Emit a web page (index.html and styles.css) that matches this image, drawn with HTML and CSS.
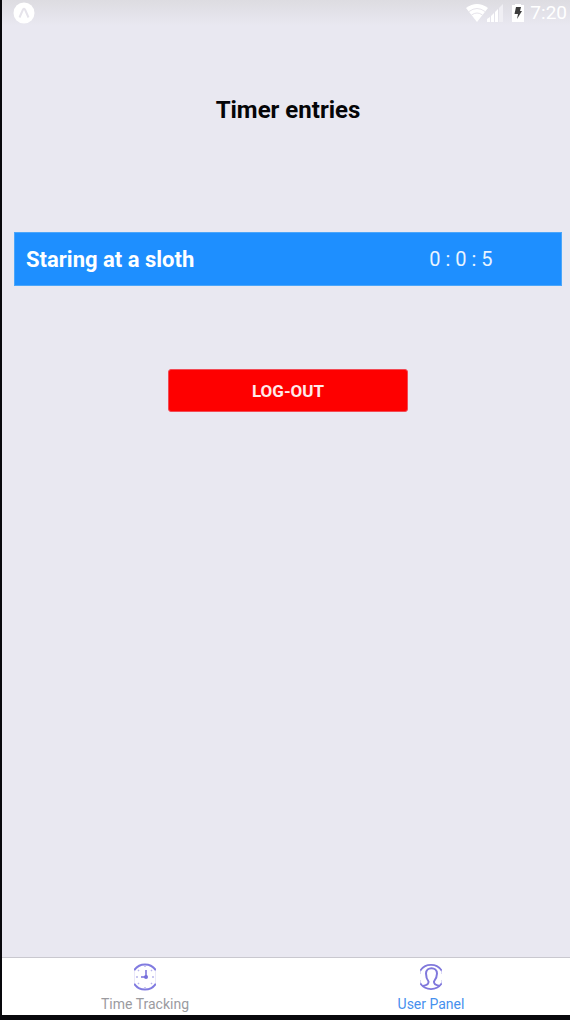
FILE: index.html
```html
<!DOCTYPE html>
<html lang="en">
<head>
<meta charset="utf-8">
<title>Timer entries</title>
<meta name="viewport" content="width=device-width, initial-scale=1">
<link rel="stylesheet" href="styles.css">
</head>
<body>
<div class="screen">
  <header class="status">
    <svg class="status-app" viewBox="0 0 22 22" aria-hidden="true">
      <circle cx="11" cy="11" r="10.5" fill="#fff"/>
      <path d="M6.500 15.500 10 7.500q1-1.500 2 0l3.500 8" fill="none" stroke="#e6e4eb" stroke-width="2"/>
    </svg>
    <div class="status-right">
      <svg class="status-signal" viewBox="0 0 40 20" aria-hidden="true">
        <path d="M0 5Q11-3 22 5L11 19Z" fill="#fff"/>
        <path d="M3 8.500q8-6 16 0M5.500 12q5.500-4 11 0" fill="none" stroke="#e6e4eb" stroke-width="1"/>
        <path d="M21 19v-3l3-2v5ZM25 19v-6l3-3v9ZM29 19V9l3-3v13Z" fill="#fff"/>
        <path d="M33 19V5l4-4v18Z" fill="#f0eff4"/>
      </svg>
      <svg class="status-battery" viewBox="0 0 12 18" aria-hidden="true">
        <path d="M0 1h3V0h6v1h3v17H0Z" fill="#fff"/>
        <path d="M4 3h5L8 7h2l-5 8 1-5H2.500Z" fill="#3c3c3c"/>
      </svg>
      <span class="clock">7:20</span>
    </div>
  </header>
  <main class="content">
    <h1 class="title">Timer entries</h1>
    <ul class="entries">
      <li class="entry">
        <span class="entry-name">Staring at a sloth</span>
        <span class="entry-time">0 : 0 : 5</span>
      </li>
    </ul>
    <button class="logout" type="button">LOG-OUT</button>
  </main>
  <nav class="tabs">
    <a class="tab" href="#tracking">
      <svg class="tab-icon" viewBox="0 0 22 28" aria-hidden="true">
        <path d="M0 7.500A13 13 0 0 1 22 7.500M0 20.500A13 13 0 0 0 22 20.500" fill="none" stroke="#817be0" stroke-width="2"/>
        <path d="M0 7v14M22 7v14" stroke="#d5d2f3" stroke-width="1"/>
        <path d="M12 7v7H7" fill="none" stroke="#7770dc" stroke-width="1.500"/>
        <circle cx="12" cy="14" r="2" fill="#7770dc"/>
        <path d="M11 3v1M11 24v1M2 14h2M18 14h2M4 7l1 1M18 7l-1 1M4 21l1-1M18 21l-1-1" stroke="#b8b5ec" stroke-width="1.500"/>
      </svg>
      <span>Time Tracking</span>
    </a>
    <a class="tab tab-active" href="#user" aria-current="page">
      <svg class="tab-icon" viewBox="0 0 22 28" aria-hidden="true">
        <path d="M0 8A13 13 0 0 1 22 8M0 20A13 13 0 0 0 22 20" fill="none" stroke="#8078dc" stroke-width="1.800"/>
        <path d="M0 7v4M0 17v4M22 7v4M22 17v4" stroke="#b8b5ec" stroke-width="1"/>
        <path d="M3 23Q9 22 8.500 18.500C6.500 16 6 14 6 10.500C6 3.500 17 3.500 17 10.500C17 14 16 16 14 18.500Q13.500 22 20 23" fill="none" stroke="#8078dc" stroke-width="2"/>
      </svg>
      <span>User Panel</span>
    </a>
  </nav>
</div>
</body>
</html>
```
FILE: styles.css
```css
* {
  box-sizing: border-box;
}

body {
  margin: 0;
  background: #08080c;
  font-family: Roboto, "Liberation Sans", sans-serif;
  overflow: hidden;
}

.screen {
  display: flex;
  flex-direction: column;
  min-height: calc(100vh - 5px);
  margin: 0 -4px 5px 2px;
  background: #e9e8f1;
}

.status {
  display: flex;
  justify-content: space-between;
  align-items: center;
  height: 26px;
  padding: 0 7px 0 11px;
  background: linear-gradient(#dddce1, #e9e8f1);
}

.status-app {
  width: 22px;
  height: 22px;
}

.status-right {
  display: flex;
  align-items: center;
  gap: 6px;
}

.status-signal {
  width: 40px;
  height: 20px;
}

.status-battery {
  width: 12px;
  height: 18px;
}

.clock {
  color: #fff;
  font-size: 19px;
  line-height: 24px;
}

.content {
  flex: 1;
  display: flex;
  flex-direction: column;
  align-items: center;
  padding: 68px 12px 0;
}

.title {
  margin: 0;
  color: #050507;
  font-size: 24px;
  line-height: 32px;
  font-weight: 700;
}

.entries {
  align-self: stretch;
  margin: 106px 0 83px;
  padding: 0;
  list-style: none;
}

.entry {
  display: grid;
  grid-template-columns: 1fr 200px;
  align-items: center;
  height: 54px;
  padding: 0 0 0 11px;
  border: 1px solid #4ba6fa;
  background: #1e8fff;
  color: #fff;
}

.entry-name {
  font-size: 22px;
  font-weight: 700;
}

.entry-time {
  color: #e8f4ff;
  font-size: 20px;
  text-align: center;
}

.logout {
  width: 240px;
  height: 43px;
  border: 1px solid #f24a55;
  border-radius: 3px;
  background: #fe0000;
  color: #ffeaea;
  font-family: inherit;
  font-size: 17px;
  font-weight: 700;
}

.tabs {
  display: grid;
  grid-template-columns: 1fr 1fr;
  height: 58px;
  border-top: 1px solid #c9c8cf;
  background: #fff;
}

.tab {
  display: flex;
  flex-direction: column;
  align-items: center;
  gap: 4px;
  padding-top: 5px;
  color: #9b9b9f;
  font-size: 14px;
  line-height: 18px;
  text-decoration: none;
}

.tab-active {
  color: #4690ee;
}

.tab-icon {
  width: 22px;
  height: 28px;
}
```
